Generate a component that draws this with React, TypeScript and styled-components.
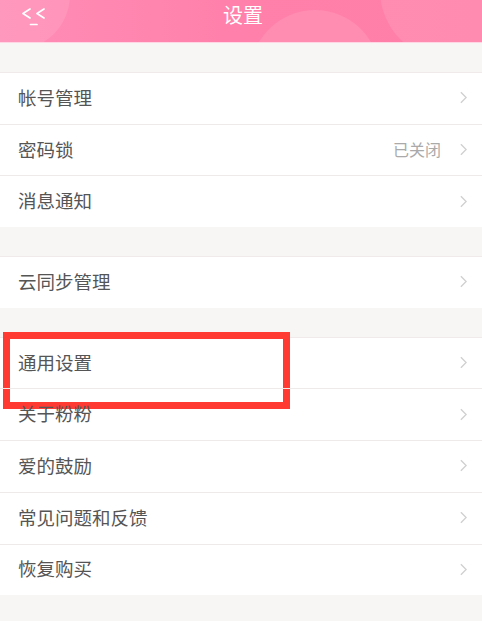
import React from 'react'
import styled, { createGlobalStyle } from 'styled-components'

const GlobalStyle = createGlobalStyle`
  html, body {
    margin: 0;
    padding: 0;
    background: #f8f5f5;
    font-family: "Noto Sans CJK SC", "Noto Sans", sans-serif;
  }
`

interface Item {
  label: string;
  value?: string;
  marked?: boolean;
}

const groups: Item[][] = [
  [{ label: '帐号管理' }, { label: '密码锁', value: '已关闭' }, { label: '消息通知' }],
  [{ label: '云同步管理' }],
  [
    { label: '通用设置', marked: true },
    { label: '关于粉粉' },
    { label: '爱的鼓励' },
    { label: '常见问题和反馈' },
    { label: '恢复购买' },
  ],
]

export default function App() {
  return (
    <>
      <GlobalStyle />
      <Page>
        <Header>
          <Bubble $x={-40} $y={-60} $size={110} />
          <Bubble $x={250} $y={10} $size={130} />
          <Bubble $x={380} $y={-80} $size={140} />
          <BackButton>
            <svg width="26" height="22" viewBox="0 0 26 22" fill="none" stroke="#fff" strokeWidth="1.7" strokeLinecap="round" strokeLinejoin="round">
              <path d="M9 2 L2 6.5 L9 11" />
              <path d="M23 2 L16 6.5 L23 11" />
              <path d="M9.5 17.5 L16 17.5" />
            </svg>
          </BackButton>
          <Title>设置</Title>
        </Header>
        {groups.map((group, gi) => (
          <Group key={gi}>
            {group.map((item) => (
              <Row key={item.label}>
                <Label>{item.label}</Label>
                {item.value && <Value>{item.value}</Value>}
                <Chevron viewBox="0 0 8 14" fill="none" stroke="#d0d0d0" strokeWidth="1.6">
                  <path d="M1 1 L7 7 L1 13" />
                </Chevron>
                {item.marked && <Highlight />}
              </Row>
            ))}
          </Group>
        ))}
      </Page>
    </>
  )
}

const Page = styled.div`
  width: 482px;
  min-height: 621px;
  background: #f8f5f5;
  display: flex;
  flex-direction: column;
  gap: 29px;
  padding-bottom: 25px;
`

const Header = styled.header`
  position: relative;
  height: 42px;
  overflow: hidden;
  background: linear-gradient(90deg, #ff8db6 0%, #ff80aa 50%, #ff7fa8 100%);
  border-bottom: 1px solid #ffd6e4;
  display: flex;
  align-items: center;
  justify-content: center;
`

const Bubble = styled.div<{ $x: number; $y: number; $size: number }>`
  position: absolute;
  left: ${({ $x }) => $x}px;
  top: ${({ $y }) => $y}px;
  width: ${({ $size }) => $size}px;
  height: ${({ $size }) => $size}px;
  border-radius: 50%;
  background: rgba(255, 255, 255, 0.1);
`

const BackButton = styled.div`
  position: absolute;
  left: 21px;
  top: 7px;
  display: flex;
`

const Title = styled.h1`
  position: relative;
  margin: 0;
  font-size: 20px;
  font-weight: 400;
  color: #fff;
  line-height: 1;
  margin-top: -12px;
  margin-left: 4px;
`

const Group = styled.div`
  background: #fff;
  border-top: 1px solid #f0eaea;
`

const Row = styled.div`
  position: relative;
  height: 50.7px;
  box-sizing: border-box;
  display: flex;
  align-items: center;
  padding: 0 15px 3px 18px;
  & + & {
    border-top: 1px solid #efeaea;
    height: 51.7px;
  }
`

const Label = styled.span`
  flex: 1;
  font-size: 18.5px;
  color: #555;
`

const Value = styled.span`
  font-size: 16px;
  color: #aaa;
  margin-right: 19px;
`

const Chevron = styled.svg`
  width: 7px;
  height: 13px;
  margin-top: 2px;
`

const Highlight = styled.div`
  position: absolute;
  left: 3px;
  top: -6px;
  width: 287px;
  height: 77px;
  box-sizing: border-box;
  border: 7px solid #ff3a33;
`
